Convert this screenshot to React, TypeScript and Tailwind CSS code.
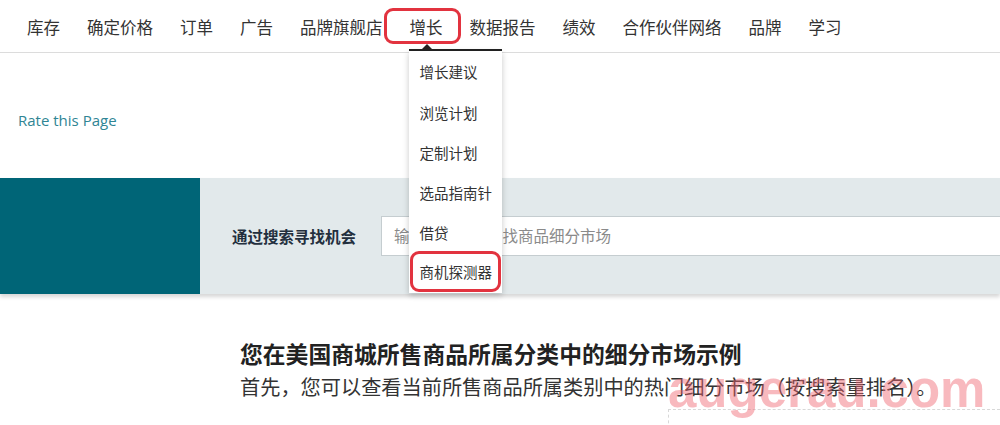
import React from "react";

const cjk = '"Noto Sans CJK SC", "Noto Sans", sans-serif';

const navItems = [
  "库存",
  "确定价格",
  "订单",
  "广告",
  "品牌旗舰店",
  "增长",
  "数据报告",
  "绩效",
  "合作伙伴网络",
  "品牌",
  "学习",
];

const menuItems = ["增长建议", "浏览计划", "定制计划", "选品指南针", "借贷", "商机探测器"];

function GrowthMenu() {
  return (
    <div className="absolute left-[-1px] top-[34px] w-[93px]">
      <div className="absolute left-[12px] top-[-5px] h-0 w-0 border-x-[6px] border-b-[6px] border-x-transparent border-b-[#222]" />
      <div className="h-[2px] w-full bg-[#222]" />
      <div className="flex flex-col bg-white pb-[2px] shadow-[0_2px_6px_rgba(0,0,0,0.22)]">
        {menuItems.map((m, i) => (
          <div
            key={m}
            className={`relative flex items-center pl-[11px] text-[14.5px] text-[#333] ${
              i === 0 ? "h-[42px]" : i === 5 ? "h-[38px]" : "h-[40px]"
            }`}
          >
            {m}
            {i === 5 && (
              <div className="absolute inset-x-[1px] top-[-2px] bottom-[-1px] rounded-[9px] border-[3px] border-[#e2333f]" />
            )}
          </div>
        ))}
      </div>
    </div>
  );
}

export default function App() {
  return (
    <div
      className="relative w-[1000px] h-[425px] overflow-hidden bg-white text-[#2b2b2b]"
      style={{ fontFamily: cjk }}
    >
      {/* Top navigation */}
      <nav className="relative z-20 flex h-[53px] items-center gap-[27px] border-b border-[#dcdcdc] pl-[27px] pt-[1px]">
        {navItems.map((item) => (
          <div key={item} className="relative text-[16.5px] leading-[24px] text-[#333]">
            {item}
            {item === "增长" && (
              <>
                <div className="absolute left-[-26px] top-[-7px] h-[36px] w-[77px] rounded-[9px] border-[3px] border-[#e2333f]" />
                <GrowthMenu />
              </>
            )}
          </div>
        ))}
      </nav>

      {/* Rate this page */}
      <div
        className="ml-[18px] mt-[57px] text-[15px] leading-[20px] text-[#2f8594]"
        style={{ fontFamily: '"Open Sans", sans-serif' }}
      >
        Rate this Page
      </div>

      {/* Search band */}
      <div className="mt-[48px] flex h-[116px] shadow-[0_3px_4px_rgba(0,0,0,0.16)]">
        <div className="w-[200px] bg-[#006577]" />
        <div className="flex flex-1 items-center bg-[#e2e9eb] pl-[32px]">
          <div className="text-[15.5px] font-bold leading-[22px] text-[#232f3e]">通过搜索寻找机会</div>
          <div className="ml-[25px] flex h-[40px] flex-1 items-center border border-r-0 border-[#c5cdd0] bg-white pl-[12px] text-[15.5px] text-[#8a8a8a]">
            输入关键词以查找商品细分市场
          </div>
        </div>
      </div>

      {/* Section */}
      <div className="ml-[240px] mt-[45px]">
        <div className="text-[22.8px] font-bold leading-[30px] text-[#222]">
          您在美国商城所售商品所属分类中的细分市场示例
        </div>
        <div className="mt-[4px] text-[20.2px] leading-[28px] text-[#333]">
          首先，您可以查看当前所售商品所属类别中的热门细分市场（按搜索量排名）。
        </div>
      </div>

      <div className="ml-[668px] mt-[8px] h-[20px] border-l border-t border-dashed border-[#d8d8d8]" />

      {/* watermark */}
      <div
        className="pointer-events-none absolute left-[668px] top-[364px] z-30 text-[51px] font-bold leading-[51px] text-[rgba(240,100,110,0.45)]"
        style={{ fontFamily: '"Liberation Sans", Arial, sans-serif' }}
      >
        augerau.com
      </div>
    </div>
  );
}
